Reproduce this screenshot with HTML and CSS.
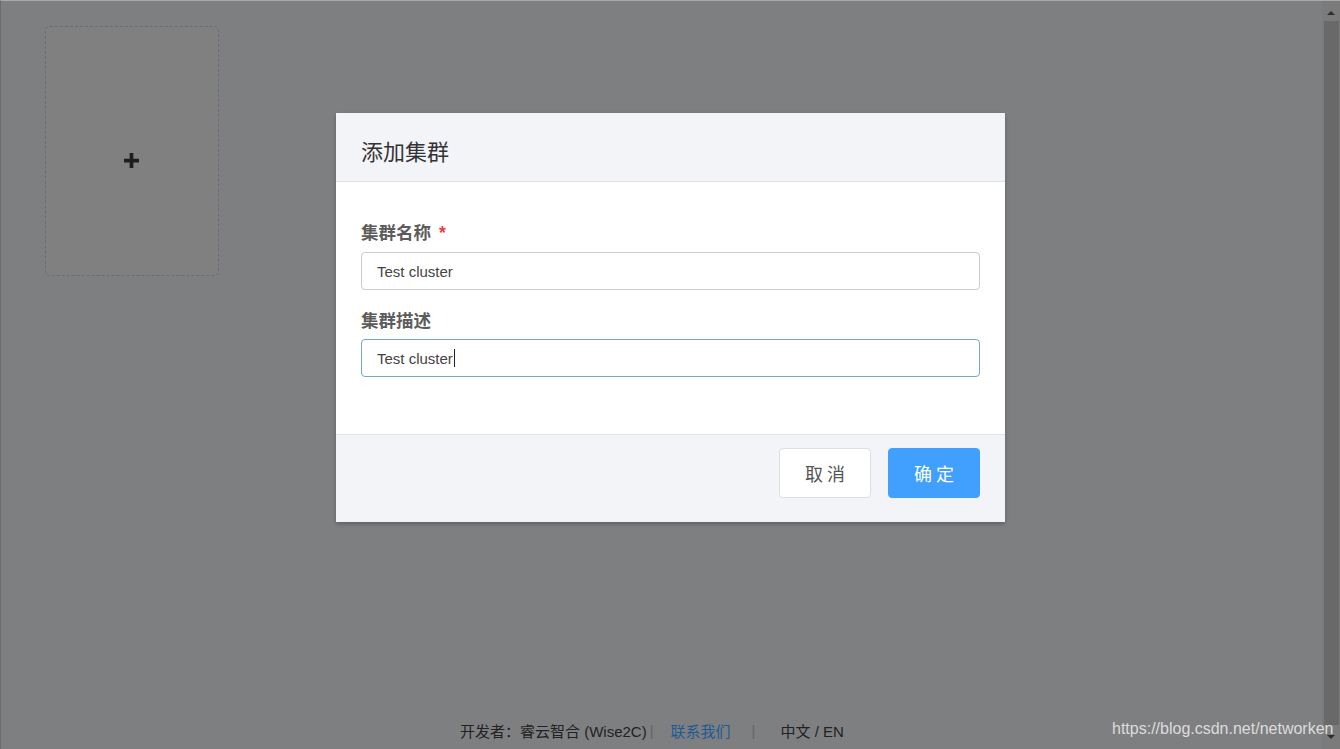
FILE: index.html
```html
<!DOCTYPE html>
<html lang="zh-CN">
<head>
<meta charset="utf-8">
<title>添加集群</title>
<link rel="stylesheet" href="styles.css">
</head>
<body>
<div class="frame">
  <div class="main">
    <div class="content">
      <div class="add-card">
        <svg class="plus" width="16" height="16" viewBox="0 0 16 16"><path d="M6 0h4v6h6v4h-6v6H6v-6H0V6h6z" fill="#1e1e1e"/></svg>
      </div>
    </div>
    <div class="footer">
      <span>开发者：睿云智合 (Wise2C)</span>
      <span class="sep">|</span>
      <a class="link">联系我们</a>
      <span class="sep">|</span>
      <span class="lang">中文 / EN</span>
    </div>
  </div>
  <div class="scrollbar">
    <div class="arrow up"></div>
    <div class="thumb"></div>
    <div class="arrow down"></div>
  </div>
</div>

<div class="modal">
  <div class="modal-header">添加集群</div>
  <div class="modal-body">
    <div class="field">
      <label class="label">集群名称<span class="req">*</span></label>
      <div class="input">Test cluster</div>
    </div>
    <div class="field">
      <label class="label">集群描述</label>
      <div class="input focus">Test cluster<span class="caret"></span></div>
    </div>
  </div>
  <div class="modal-footer">
    <button class="btn cancel">取消</button>
    <button class="btn ok">确定</button>
  </div>
</div>

<div class="watermark">https://blog.csdn.net/networken</div>
</body>
</html>
```
FILE: styles.css
```css
html, body {
  margin: 0;
  padding: 0;
  height: 100%;
}
body {
  font-family: "Liberation Sans", "Noto Sans CJK SC", sans-serif;
  background: #7e7f81;
  overflow: hidden;
}
.frame {
  display: flex;
  height: 749px;
  box-sizing: border-box;
  border-top: 1px solid #a9a9a9;
  border-left: 1px solid #6c6c6c;
}
.main {
  flex: 1;
  display: flex;
  flex-direction: column;
}
.content {
  flex: 1;
  padding: 25px 0 0 44px;
}
.add-card {
  width: 172px;
  height: 248px;
  border: 1px dashed #686d74;
  border-radius: 5px;
  background: #808080;
  display: flex;
  align-items: center;
  justify-content: center;
}
.plus {
  display: block;
  width: 15px;
  height: 15px;
  margin: 19px 0 0 -2px;
}
.footer {
  height: 34px;
  display: flex;
  align-items: center;
  padding-left: 459px;
  padding-bottom: 2px;
  font-family: "Liberation Sans", "Noto Sans CJK SC", sans-serif;
  font-size: 15px;
  color: #222;
}
.sep {
  color: #666;
  margin: 0 0 0 3px;
}
.link {
  color: #1d5a94;
  margin: 0 18px 0 17px;
}
.lang {
  margin-left: 25px;
}
.scrollbar {
  width: 18px;
  background: #7b7b7b;
  display: flex;
  flex-direction: column;
  align-items: center;
}
.thumb {
  width: 15px;
  flex: 1;
  background: #696969;
  margin: 6px 0 10px 1px;
}
.arrow {
  width: 0;
  height: 0;
  border-left: 4px solid transparent;
  border-right: 4px solid transparent;
}
.arrow.up {
  border-bottom: 4px solid #2f2f2f;
  margin-top: 10px;
}
.arrow.down {
  border-top: 4px solid #2f2f2f;
  margin-bottom: 10px;
}

.modal {
  position: absolute;
  left: 336px;
  top: 113px;
  width: 669px;
  background: #fff;
  box-shadow: 0 2px 4px rgba(0,0,0,0.25);
  font-family: "Liberation Sans", "Noto Sans CJK SC", sans-serif;
}
.modal-header {
  height: 69px;
  box-sizing: border-box;
  background: #f3f4f8;
  border-bottom: 1px solid #e1e2e4;
  padding: 22px 25px 0;
  font-family: "Noto Sans CJK SC", sans-serif;
  font-size: 22px;
  line-height: 30px;
  color: #333;
}
.modal-body {
  padding: 39px 25px 57px;
  display: flex;
  flex-direction: column;
  gap: 19px;
}
.field {
  display: flex;
  flex-direction: column;
}
.label {
  font-family: "Noto Sans CJK SC", sans-serif;
  font-weight: bold;
  font-size: 17.5px;
  line-height: 22px;
  color: #5c5c5c;
  margin-bottom: 8px;
}
.req {
  color: #e5413f;
  margin-left: 8px;
  font-family: "Liberation Sans", sans-serif;
}
.input {
  height: 38px;
  box-sizing: border-box;
  border: 1px solid #cbcbcb;
  border-radius: 4px;
  padding: 0 15px;
  display: flex;
  align-items: center;
  font-size: 15px;
  color: #444;
}
.input.focus {
  border-color: #78a5d1;
}
.caret {
  display: inline-block;
  width: 1px;
  height: 18px;
  background: #222;
  margin-left: 1px;
}
.modal-footer {
  height: 88px;
  box-sizing: border-box;
  background: #f3f4f8;
  border-top: 1px solid #e3e4e7;
  display: flex;
  justify-content: flex-end;
  align-items: flex-start;
  padding: 13px 25px 0;
  gap: 17px;
}
.btn {
  width: 92px;
  height: 50px;
  border-radius: 4px;
  font-family: "Noto Sans CJK SC", sans-serif;
  font-size: 18px;
  letter-spacing: 4px;
  text-indent: 4px;
  cursor: pointer;
}
.btn.cancel {
  background: #fff;
  border: 1px solid #dcdfe6;
  color: #555;
}
.btn.ok {
  background: #419ffe;
  border: 1px solid #419ffe;
  color: #fff;
}
.watermark {
  position: absolute;
  left: 1112px;
  top: 720px;
  font-size: 16px;
  color: #dcdcdc;
  font-family: "Liberation Sans", sans-serif;
}
```
